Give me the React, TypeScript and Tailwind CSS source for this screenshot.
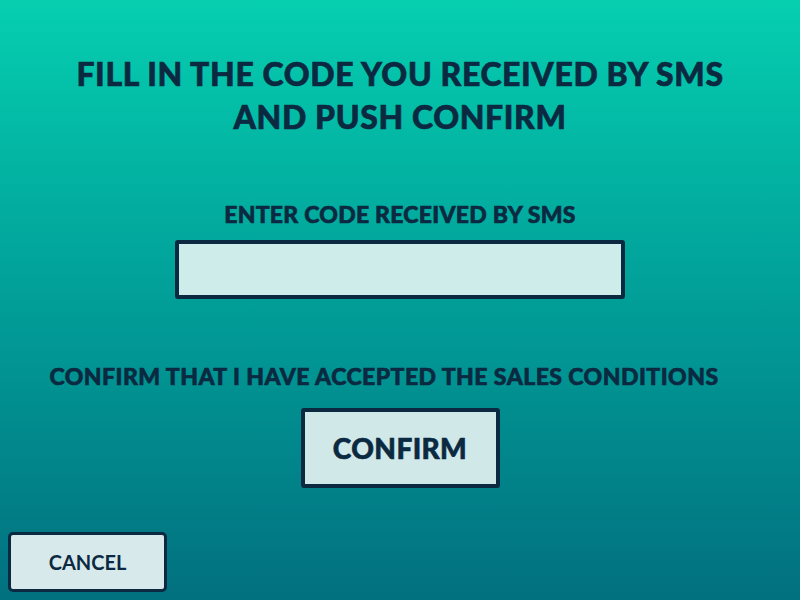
import React from "react";

const App = () => {
  return (
    <div
      className="w-[800px] h-[600px] flex flex-col items-center bg-gradient-to-b from-[#06cfb0] to-[#02707f] text-[#0b2940] overflow-hidden [-webkit-text-stroke:0.6px_#0b2940]"
      style={{ fontFamily: "Lato, 'Liberation Sans', sans-serif" }}
    >
      <h1 className="mt-[52px] text-center text-[32px] leading-[43px] font-black tracking-[0.6px]">
        FILL IN THE CODE YOU RECEIVED BY SMS
        <br />
        AND PUSH CONFIRM
      </h1>

      <div className="mt-[64px] text-[23px] leading-[24px] font-black tracking-[0.25px]">
        ENTER CODE RECEIVED BY SMS
      </div>
      <input
        type="text"
        className="mt-[14px] w-[450px] h-[59px] bg-[#cdecea] border-4 border-[#0b2940] rounded-[3px] outline-none"
      />

      <div className="mt-[65px] mr-[32px] text-[23px] leading-[24px] font-black tracking-[0.45px]">
        CONFIRM THAT I HAVE ACCEPTED THE SALES CONDITIONS
      </div>
      <button className="mt-[20px] w-[199px] h-[80px] bg-[#d1e8e9] border-4 border-[#0b2940] rounded-[3px] text-[28px] font-black tracking-[0.4px]">
        CONFIRM
      </button>

      <div className="mt-auto mb-[8px] self-start ml-[8px]">
        <button className="w-[159px] h-[60px] bg-[#d8e9ec] border-[3px] border-[#0b2940] rounded-[5px] text-[20px] font-bold [-webkit-text-stroke:0px]">
          CANCEL
        </button>
      </div>
    </div>
  );
};

export default App;
